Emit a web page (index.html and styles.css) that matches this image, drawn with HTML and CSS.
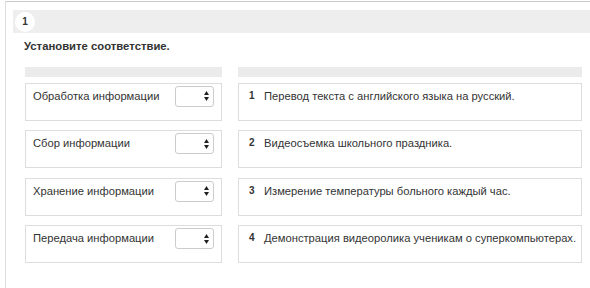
FILE: index.html
```html
<!DOCTYPE html>
<html lang="ru">
<head>
<meta charset="utf-8">
<link rel="stylesheet" href="styles.css">
</head>
<body>
<div class="frame">
  <div class="qhead"><span class="qnum">1</span></div>
  <div class="task">Установите соответствие.</div>
  <div class="cols">
    <div class="col left">
      <div class="colhead"></div>
      <div class="item"><span class="label">Обработка информации</span><span class="sel"><svg width="5" height="10" viewBox="0 0 5 10"><path d="M2.5 0L5 4H0Z M2.5 10L5 6H0Z" fill="#222"/></svg></span></div>
      <div class="item"><span class="label">Сбор информации</span><span class="sel"><svg width="5" height="10" viewBox="0 0 5 10"><path d="M2.5 0L5 4H0Z M2.5 10L5 6H0Z" fill="#222"/></svg></span></div>
      <div class="item"><span class="label">Хранение информации</span><span class="sel"><svg width="5" height="10" viewBox="0 0 5 10"><path d="M2.5 0L5 4H0Z M2.5 10L5 6H0Z" fill="#222"/></svg></span></div>
      <div class="item"><span class="label">Передача информации</span><span class="sel"><svg width="5" height="10" viewBox="0 0 5 10"><path d="M2.5 0L5 4H0Z M2.5 10L5 6H0Z" fill="#222"/></svg></span></div>
    </div>
    <div class="col right">
      <div class="colhead"></div>
      <div class="item"><span class="n">1</span><span class="label">Перевод текста с английского языка на русский.</span></div>
      <div class="item"><span class="n">2</span><span class="label">Видеосъемка школьного праздника.</span></div>
      <div class="item"><span class="n">3</span><span class="label">Измерение температуры больного каждый час.</span></div>
      <div class="item"><span class="n">4</span><span class="label">Демонстрация видеоролика ученикам о суперкомпьютерах.</span></div>
    </div>
  </div>
</div>
</body>
</html>
```
FILE: styles.css
```css
html, body { margin: 0; padding: 0; background: #fff; }
body { font-family: "Liberation Sans", Arial, sans-serif; color: #333; font-size: 11.2px; }
.frame {
  margin: 1px 0 0 5px;
  border-top: 1px solid #ccc;
  border-left: 1px solid #ddd;
  height: 287px;
  box-sizing: border-box;
  padding: 8px 0 0 7px;
}
.qhead {
  background: #eeeeee;
  height: 23px;
  display: flex;
  align-items: center;
  padding-left: 2px;
}
.qnum {
  width: 20px; height: 20px; border-radius: 50%;
  background: #fff;
  display: flex; align-items: center; justify-content: center;
  font-weight: bold; font-size: 10px; color: #333;
}
.task {
  font-weight: bold;
  font-size: 11.3px;
  margin: 7px 0 0 11px;
  height: 16px;
}
.cols {
  display: flex;
  gap: 16px;
  margin: 11px 0 0 12px;
  width: 557px;
}
.col { display: flex; flex-direction: column; gap: 9.5px; }
.left { width: 197px; }
.right { width: 344px; }
.colhead { background: #ebebeb; height: 10px; margin-bottom: -4px; }
.item {
  border: 1px solid #ddd;
  height: 38px;
  box-sizing: border-box;
  display: flex;
  align-items: flex-start;
  padding: 6px 7px 0 7px;
  white-space: nowrap;
}
.left .item { justify-content: space-between; padding-top: 2px; }
.left .label { padding-top: 4px; }
.sel {
  width: 39px; height: 21px; box-sizing: border-box;
  border: 1px solid #ccc; border-radius: 3px;
  display: flex; justify-content: flex-end; align-items: center;
  padding-right: 4px;
  background: #fff;
  flex-shrink: 0;
}
.sel svg { display: block; }
.right .item { padding-left: 10px; }
.n { font-weight: bold; font-size: 10px; width: 15px; flex-shrink: 0; }
```
